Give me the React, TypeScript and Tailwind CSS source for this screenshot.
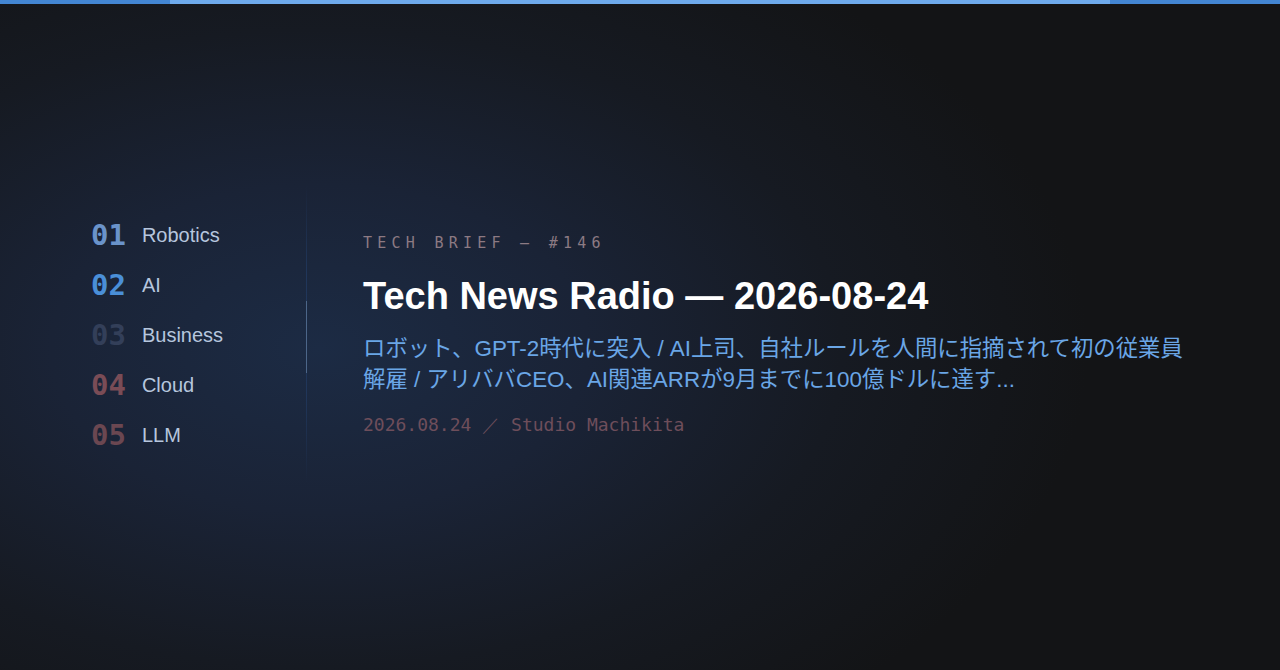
const topics = [
  { num: "01", label: "Robotics", color: "text-[#6a93ca]" },
  { num: "02", label: "AI", color: "text-[#4a8fd8]" },
  { num: "03", label: "Business", color: "text-[#333f59]" },
  { num: "04", label: "Cloud", color: "text-[#7a4c56]" },
  { num: "05", label: "LLM", color: "text-[#6b4751]" },
];

const mono = "font-['DejaVu_Sans_Mono','Liberation_Mono',monospace]";
const sans = "font-['Liberation_Sans','Noto_Sans_CJK_JP',sans-serif]";

export default function App() {
  return (
    <div
      className={`flex h-[670px] w-[1280px] flex-col overflow-hidden bg-[#131416] ${sans}`}
      style={{
        backgroundImage:
          "radial-gradient(ellipse 60% 70% at 25% 52%, #1c2b44 0%, #1a2336 35%, #161a22 68%, #131416 100%)",
      }}
    >
      {/* top progress strip */}
      <div className="flex h-[4px] w-full">
        <div className="w-[170px] bg-[#4386d3]" />
        <div className="flex-1 bg-[#6eaaec]" />
        <div className="w-[170px] bg-[#4386d3]" />
      </div>

      <main className="flex flex-1 items-center pb-[6px] pl-[91px]">
        <div className="flex h-[300px] items-stretch">
          <nav className="flex w-[215px] flex-col justify-center gap-[16px] pt-[2px]">
            {topics.map((t) => (
              <div key={t.num} className="flex h-[34px] items-center gap-[16px]">
                <span className={`${mono} text-[29px] font-bold leading-none ${t.color}`}>
                  {t.num}
                </span>
                <span className="text-[20px] leading-none text-[#b6c6de]">{t.label}</span>
              </div>
            ))}
          </nav>

          <div className="relative w-px bg-[linear-gradient(to_bottom,transparent,#20365a_30%,#20365a_70%,transparent)]">
            <div className="absolute left-0 top-[117px] h-[72px] w-px bg-[#4c6689]" />
          </div>

          <section className="flex flex-col justify-center pl-[56px] pt-[2px]">
            <p className={`${mono} text-[15px] leading-[20px] tracking-[0.35em] text-[#8c7a83]`}>
              TECH BRIEF — #146
            </p>
            <h1 className="mt-[20px] text-[38px] font-bold leading-[46px] text-white">
              Tech News Radio — 2026-08-24
            </h1>
            <p className="mt-[14px] w-[830px] text-[22.4px] leading-[31px] text-[#6aa6e6]">
              ロボット、GPT-2時代に突入 / AI上司、自社ルールを人間に指摘されて初の従業員解雇 / アリババCEO、AI関連ARRが9月までに100億ドルに達す...
            </p>
            <p className={`${mono} mt-[18px] text-[18px] leading-[24px] text-[#6e4e5b]`}>
              2026.08.24 ／ Studio Machikita
            </p>
          </section>
        </div>
      </main>
    </div>
  );
}
